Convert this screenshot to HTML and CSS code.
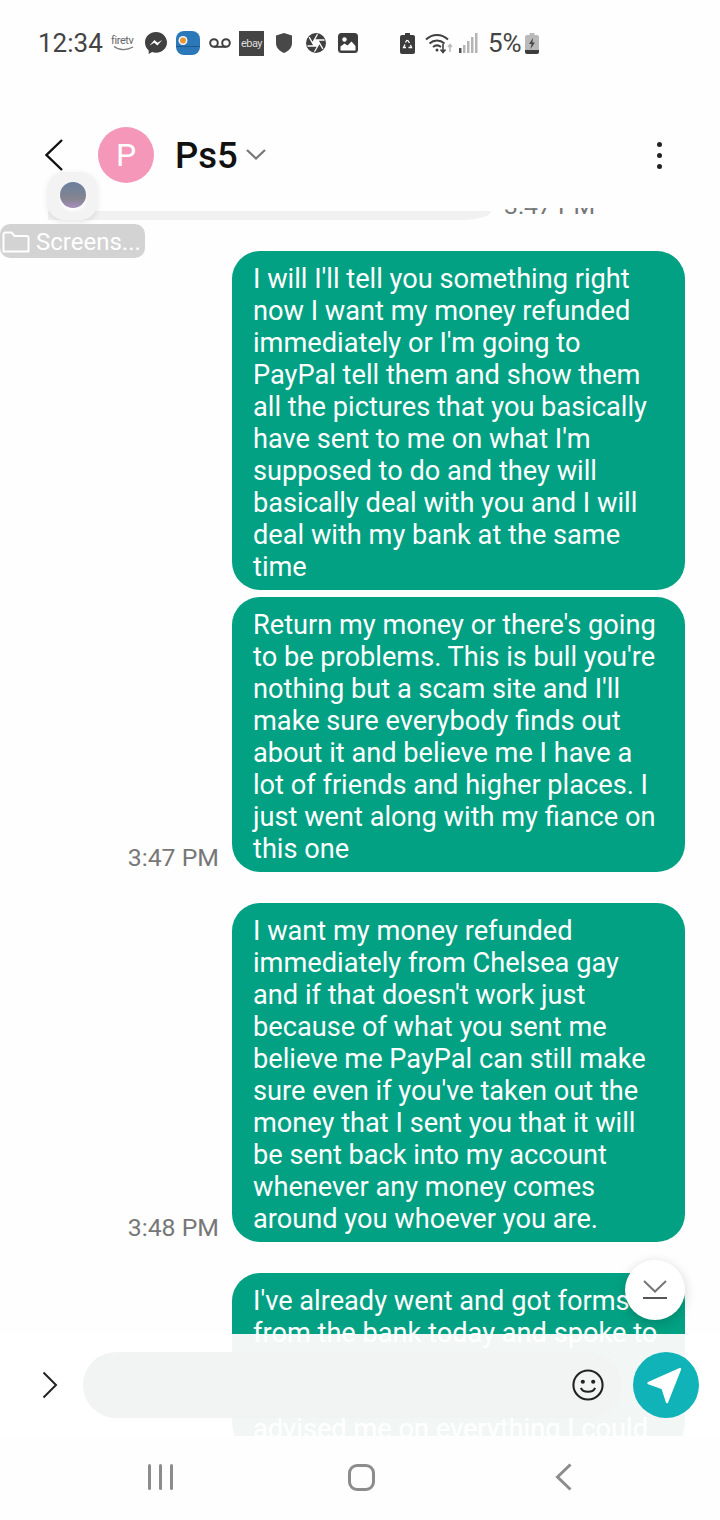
FILE: index.html
```html
<!doctype html>
<html lang="en">
  <head>
    <meta charset="UTF-8" />
    <meta name="viewport" content="width=device-width, initial-scale=1.0" />
    <title>Ps5</title>
    <link rel="stylesheet" href="styles.css">
  </head>
  <body>
    <div id="screen">
      <div id="status-bar">
        <span class="clock">12:34</span>
        <div class="firetv">
          <span>firetv</span>
          <svg viewBox="0 0 25 5"><path d="M3 .5c5 4 13 4 19 .5" fill="none" stroke="#777" stroke-width="1.200"/></svg>
        </div>
        <svg class="ic-messenger" viewBox="0 0 22 22"><path d="M11 0C5 0 0 4.500 0 10.500c0 3.200 1.400 6 3.700 7.900V22l3.400-1.900c1.200.4 2.500.6 3.900.6 6 0 11-4.400 11-10.200S17 0 11 0z" fill="#404040"/><path d="M4.500 13.500l5-5.500 3 2.700 4.800-2.700-5 5.500-3-2.800z" fill="#fff"/></svg>
        <svg class="ic-app" viewBox="0 0 24 24"><rect width="24" height="24" rx="8" fill="#2b78b8"/><path d="M0 15.500h24" stroke="#1d5a8e" stroke-width="1"/><circle cx="7" cy="9.500" r="4.500" fill="#f0f4f7"/><circle cx="7" cy="9.500" r="3" fill="#e8962f"/></svg>
        <svg class="ic-voicemail" viewBox="0 0 22 12"><circle cx="5" cy="6" r="3.800" fill="none" stroke="#404040" stroke-width="2"/><circle cx="17" cy="6" r="3.800" fill="none" stroke="#404040" stroke-width="2"/><path d="M5 9.800h12" stroke="#404040" stroke-width="2"/></svg>
        <span class="ebay">ebay</span>
        <svg class="ic-shield" viewBox="0 0 16 20"><path d="M8 0l8 2.500v7.500c0 4.700-3.300 8.200-8 10-4.700-1.800-8-5.300-8-10V2.500z" fill="#484848"/></svg>
        <svg class="ic-aperture" viewBox="0 0 20 20"><circle cx="10" cy="10" r="10" fill="#404040"/><path d="M13.500 10l-1.750 3h-3.500L6.500 10l1.750-3h3.500z" fill="#fff"/><path d="M8.250 7H18.500M11.750 7l5.100 8.800M13.500 10l-5 8.700M11.750 13H1.500M8.250 13L3.150 4.200M6.500 10l5-8.700" stroke="#fff" stroke-width="1.300"/></svg>
        <svg class="ic-image" viewBox="0 0 20 20"><rect width="20" height="20" rx="3.500" fill="#3c3c3c"/><circle cx="6.500" cy="6.500" r="2.200" fill="#fff"/><path d="M2.500 17.500v-4l4-3 3 2 4-4 4 4.500v4.500z" fill="#fff"/></svg>
        <div class="status-right">
          <svg class="ic-batsave" viewBox="0 0 15 21"><path d="M5 0h5v2h3a2 2 0 0 1 2 2v15a2 2 0 0 1-2 2H2a2 2 0 0 1-2-2V4a2 2 0 0 1 2-2h3z" fill="#3c3c3c"/><path d="M7.500 7l2 3M10.500 12l1 2.500H8.500M6 14.500H3.500l1.500-3M5.500 9.500L7 7" fill="none" stroke="#fff" stroke-width="1.300"/></svg>
          <svg class="ic-wifi" viewBox="0 0 28 22"><path d="M1 7.500c6.500-6 15.500-6 22 0M4.500 11.500c4.500-4 10.500-4 15 0M8 15c2.500-2 5.500-2 8 0" fill="none" stroke="#404040" stroke-width="2"/><circle cx="12" cy="18" r="1.500" fill="#404040"/><path d="M18 12v8M15.500 17.500l2.500 3 2.500-3" fill="none" stroke="#404040" stroke-width="1.600"/><path d="M25 20v-7M23 15l2-2.500 2 2.500" fill="none" stroke="#bbb" stroke-width="1.600"/></svg>
          <svg class="ic-signal" viewBox="0 0 19 20"><rect x="0" y="15" width="2.500" height="5" fill="#505050"/><rect x="4" y="12" width="2.500" height="8" fill="#b5b5b5"/><rect x="8" y="8" width="2.500" height="12" fill="#b5b5b5"/><rect x="12" y="4" width="2.500" height="16" fill="#b5b5b5"/><rect x="16" y="0" width="2.500" height="20" fill="#b5b5b5"/></svg>
          <span class="battery-pct">5%</span>
          <svg class="ic-battery" viewBox="0 0 14 21"><path d="M4.500 0h5v2h2.500a2 2 0 0 1 2 2v13H0V4a2 2 0 0 1 2-2h2.500z" fill="#b9b9b9"/><path d="M0 17h14v2a2 2 0 0 1-2 2H2a2 2 0 0 1-2-2z" fill="#3c3c3c"/><path d="M8 5L4 11h2.500L5.500 16 10 9.500H7.500z" fill="#484848"/></svg>
        </div>
      </div>

      <div id="header">
        <svg class="ic-back" viewBox="0 0 18 32"><path d="M17 1L1.500 16 17 31" fill="none" stroke="#111" stroke-width="2.400"/></svg>
        <div class="avatar">P</div>
        <span class="contact-name">Ps5</span>
        <svg class="ic-caret" viewBox="0 0 20 11"><path d="M1 1l9 8.500L19 1" fill="none" stroke="#777" stroke-width="2.200"/></svg>
        <div class="more-btn"><i></i><i></i><i></i></div>
      </div>

      <div id="messages">
        <div class="row row-received row-clipped">
          <div class="bubble-in"></div>
          <span class="time">3:47 PM</span>
        </div>
        <div class="row">
          <div class="bubble">I will I'll tell you something right now I want my money refunded immediately or I'm going to PayPal tell them and show them all the pictures that you basically have sent to me on what I'm supposed to do and they will basically deal with you and I will deal with my bank at the same time</div>
        </div>
        <div class="row row-joined">
          <span class="time">3:47 PM</span>
          <div class="bubble">Return my money or there's going to be problems. This is bull you're nothing but a scam site and I'll make sure everybody finds out about it and believe me I have a lot of friends and higher places. I just went along with my fiance on this one</div>
        </div>
        <div class="row">
          <span class="time">3:48 PM</span>
          <div class="bubble">I want my money refunded immediately from Chelsea gay and if that doesn't work just because of what you sent me believe me PayPal can still make sure even if you've taken out the money that I sent you that it will be sent back into my account whenever any money comes around you whoever you are.</div>
        </div>
        <div class="row">
          <div class="bubble">I've already went and got forms<br>from the bank today and spoke to<br>&nbsp;<br>&nbsp;<br>advised me on everything I could</div>
        </div>
      </div>

      <div id="composer">
        <svg class="ic-expand" viewBox="0 0 16 28"><path d="M1.500 1.500L14 14 1.500 26.500" fill="none" stroke="#222" stroke-width="2"/></svg>
        <div class="input-pill">
          <svg class="ic-emoji" viewBox="0 0 34 34"><circle cx="17" cy="17" r="15.500" fill="none" stroke="#222" stroke-width="2.200"/><circle cx="11.500" cy="13.500" r="2.200" fill="#222"/><circle cx="22.500" cy="13.500" r="2.200" fill="#222"/><path d="M9.500 20c2 5.500 13 5.500 15 0" fill="none" stroke="#222" stroke-width="2.200"/></svg>
        </div>
        <div class="send-btn">
          <svg viewBox="0 0 66 66"><path d="M47 17L15.500 31l14 5 4.500 14z" fill="#fff" stroke="#fff" stroke-width="2.400" stroke-linejoin="round"/></svg>
        </div>
      </div>

      <div id="nav-bar">
        <div class="nav-recents"><i></i><i></i><i></i></div>
        <div class="nav-home"></div>
        <svg class="nav-back" viewBox="0 0 18 28"><path d="M15.500 1.500L2.500 14l13 12.500" fill="none" stroke="#8c8c8c" stroke-width="3"/></svg>
      </div>

      <div class="float-camera"><div class="lens"></div></div>
      <div class="float-chip">
        <svg viewBox="0 0 28 22"><path d="M1.500 20.500V3.500a2 2 0 0 1 2-2h6l3 3.500h12a2 2 0 0 1 2 2v13.500z" fill="none" stroke="#fff" stroke-width="2"/></svg>
        <span>Screens...</span>
      </div>
      <div class="scroll-btn">
        <svg viewBox="0 0 26 20"><path d="M2 1l11 10.500L24 1" fill="none" stroke="#777" stroke-width="2"/><path d="M1 18h24" stroke="#555" stroke-width="2"/></svg>
      </div>
    </div>
  </body>
</html>
```

FILE: styles.css
```css
* {
  box-sizing: border-box;
}
body {
  margin: 0;
  font-family: Roboto, "Liberation Sans", sans-serif;
  background-color: #fefefe;
}
svg {
  display: block;
  flex-shrink: 0;
}
#screen {
  position: relative;
  display: flex;
  flex-direction: column;
  width: 720px;
  height: 1520px;
  overflow: hidden;
  background-color: #fefefe;
}

/* status bar */
#status-bar {
  display: flex;
  align-items: center;
  height: 86px;
  padding-left: 38px;
  color: #444;
}
.clock {
  font-size: 26px;
  width: 73px;
}
.firetv {
  width: 25px;
  margin-right: 9px;
  font-size: 11px;
  line-height: 11px;
  letter-spacing: -0.4px;
  white-space: nowrap;
  color: #666;
}
.firetv svg {
  width: 25px;
  height: 5px;
}
.ic-messenger {
  width: 22px;
  height: 22px;
  margin-right: 9px;
}
.ic-app {
  width: 24px;
  height: 24px;
  margin-right: 9px;
}
.ic-voicemail {
  width: 22px;
  height: 12px;
  margin-right: 8px;
}
.ebay {
  width: 25px;
  height: 25px;
  margin-right: 12px;
  background-color: #444;
  color: #ddd;
  font-size: 11px;
  line-height: 25px;
  letter-spacing: -0.5px;
  text-align: center;
}
.ic-shield {
  width: 16px;
  height: 20px;
  margin-right: 14px;
}
.ic-aperture {
  width: 20px;
  height: 20px;
  margin-right: 12px;
}
.ic-image {
  width: 20px;
  height: 20px;
}
.status-right {
  display: flex;
  align-items: center;
  margin-left: 42px;
}
.ic-batsave {
  width: 15px;
  height: 21px;
  margin-right: 10px;
}
.ic-wifi {
  width: 28px;
  height: 22px;
  margin-right: 6px;
}
.ic-signal {
  width: 19px;
  height: 20px;
  margin-right: 10px;
}
.battery-pct {
  width: 37px;
  font-size: 26px;
}
.ic-battery {
  width: 14px;
  height: 21px;
}

/* conversation header */
#header {
  display: flex;
  align-items: center;
  height: 122px;
  padding: 41px 0 25px 45px;
}
.ic-back {
  width: 18px;
  height: 32px;
  margin-right: 35px;
}
.avatar {
  width: 56px;
  height: 56px;
  margin-right: 21px;
  border-radius: 50%;
  background-color: #f597b9;
  color: #fff;
  font-size: 32px;
  line-height: 56px;
  text-align: center;
}
.contact-name {
  font-size: 36.500px;
  font-weight: 500;
  color: #111;
}
.ic-caret {
  width: 20px;
  height: 11px;
  margin-left: 8px;
  margin-top: -2px;
}
.more-btn {
  display: flex;
  flex-direction: column;
  gap: 6px;
  margin-left: auto;
  margin-right: 58px;
}
.more-btn i {
  width: 5px;
  height: 5px;
  border-radius: 50%;
  background-color: #222;
}

/* message list */
#messages {
  display: flex;
  flex-direction: column;
  gap: 31px;
  height: 1228px;
  padding-right: 35px;
  overflow: hidden;
}
.row {
  display: flex;
  flex-shrink: 0;
  justify-content: flex-end;
  align-items: flex-end;
  gap: 13px;
}
.row-joined {
  margin-top: -24px;
}
.row-received {
  justify-content: flex-start;
  padding-left: 48px;
}
.row-clipped {
  height: 60px;
  margin-top: -48px;
}
.bubble-in {
  width: 443px;
  height: 9px;
  border-radius: 0 0 28px 0 / 0 0 9px 0;
  background-color: #f1f1f1;
}
.bubble {
  width: 453px;
  padding: 12px 21px 7px;
  border-radius: 28px;
  background-color: #03a183;
  color: #fff;
  font-size: 27.200px;
  line-height: 32px;
}
.time {
  font-size: 24.800px;
  color: #777;
  white-space: nowrap;
}

/* composer */
#composer {
  position: absolute;
  left: 0;
  right: 0;
  top: 1334px;
  height: 102px;
  display: flex;
  align-items: center;
  padding: 18px 21px 18px 42px;
  background-color: rgba(255, 255, 255, 0.93);
  backdrop-filter: saturate(0.4);
}
.ic-expand {
  width: 16px;
  height: 28px;
  margin-right: 25px;
}
.input-pill {
  display: flex;
  align-items: center;
  justify-content: flex-end;
  width: 539px;
  height: 66px;
  padding-right: 18px;
  border-radius: 33px;
  background-color: #f2f3f3;
}
.ic-emoji {
  width: 32px;
  height: 32px;
}
.send-btn {
  width: 66px;
  height: 66px;
  margin-left: auto;
  border-radius: 50%;
  background-color: #10b3b8;
}

/* bottom navigation */
#nav-bar {
  display: flex;
  align-items: center;
  height: 84px;
  padding: 0 0 2px 148px;
}
.nav-recents {
  display: flex;
  gap: 8px;
  margin-right: 175px;
}
.nav-recents i {
  width: 3px;
  height: 26px;
  border-radius: 2px;
  background-color: #8c8c8c;
}
.nav-home {
  width: 27px;
  height: 27px;
  margin-right: 180px;
  border: 3px solid #8c8c8c;
  border-radius: 9px;
}
.nav-back {
  width: 18px;
  height: 28px;
}

/* floating things over the conversation */
.float-camera {
  position: absolute;
  left: 48px;
  top: 172px;
  display: flex;
  align-items: center;
  justify-content: center;
  width: 49px;
  height: 48px;
  padding-bottom: 2px;
  border-radius: 16px;
  background-color: #f3f3f3;
  box-shadow: 0 2px 6px rgba(0, 0, 0, 0.1);
}
.lens {
  width: 26px;
  height: 26px;
  border-radius: 50%;
  background: linear-gradient(#6a7f9f, #858590 65%, #a98fc0);
  box-shadow: 0 3px 3px #fff;
}
.float-chip {
  position: absolute;
  left: 0;
  top: 224px;
  display: flex;
  align-items: center;
  gap: 6px;
  width: 145px;
  height: 34px;
  padding: 2px 0 0 2px;
  border-radius: 10px;
  background-color: #d3d3d3;
  color: #fff;
  font-size: 24px;
  white-space: nowrap;
}
.float-chip svg {
  width: 28px;
  height: 22px;
}
.scroll-btn {
  position: absolute;
  left: 625px;
  top: 1260px;
  display: flex;
  align-items: center;
  justify-content: center;
  width: 60px;
  height: 60px;
  border-radius: 50%;
  background-color: #fff;
  box-shadow: 0 3px 12px rgba(0, 0, 0, 0.18);
}
.scroll-btn svg {
  width: 26px;
  height: 20px;
}
```
